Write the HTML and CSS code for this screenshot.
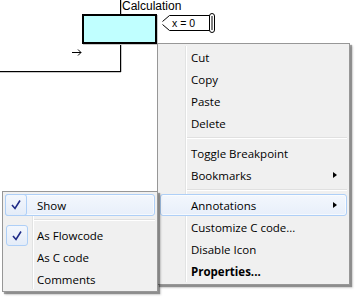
FILE: index.html
```html
<!DOCTYPE html>
<html>
<head>
<meta charset="utf-8">
<link rel="stylesheet" href="styles.css">
</head>
<body>
<div class="canvas">
  <div class="wire wire-v-top"></div>
  <div class="wire wire-v-bottom"></div>
  <div class="wire wire-h"></div>
  <div class="calc-box"></div>
  <div class="calc-label">Calculation</div>
  <svg class="tag" width="60" height="22" viewBox="0 0 60 22">
    <path d="M3.5 8.5 L10.5 2.5 L51.5 2.5 L51.5 17.5 L10.5 17.5 L3.5 11.5" fill="#fff" stroke="#000" stroke-width="1"/>
    <rect x="50.5" y="0.5" width="5" height="19" rx="2.5" fill="#fff" stroke="#000"/>
    <line x1="53" y1="3" x2="53" y2="17" stroke="#000" stroke-width="1"/>
    <text x="13" y="14" class="tag-text">x = 0</text>
  </svg>
  <svg class="arrow" width="12" height="8" viewBox="0 0 12 8">
    <path d="M0 4.5 H9 M6 1.5 L9 4.5 L6 7.5" fill="none" stroke="#000" stroke-width="1"/>
  </svg>

  <div class="menu main-menu">
    <div class="gutter"></div>
    <div class="item">Cut</div>
    <div class="item">Copy</div>
    <div class="item">Paste</div>
    <div class="item">Delete</div>
    <div class="sep"></div>
    <div class="item">Toggle Breakpoint</div>
    <div class="item">Bookmarks<span class="sub-arrow"></span></div>
    <div class="sep"></div>
    <div class="item active">Annotations<span class="sub-arrow"></span></div>
    <div class="item">Customize C code...</div>
    <div class="item">Disable Icon</div>
    <div class="item bold">Properties...</div>
  </div>

  <div class="menu sub-menu">
    <div class="gutter"></div>
    <div class="item active"><span class="check"><svg width="12" height="12" viewBox="0 0 12 12"><path d="M2 6 L5 9.5 L10 1.5" fill="none" stroke="#1e2a86" stroke-width="1.6"/></svg></span>Show</div>
    <div class="sep"></div>
    <div class="item"><span class="check"><svg width="12" height="12" viewBox="0 0 12 12"><path d="M2 6 L5 9.5 L10 1.5" fill="none" stroke="#1e2a86" stroke-width="1.6"/></svg></span>As Flowcode</div>
    <div class="item">As C code</div>
    <div class="item">Comments</div>
  </div>
</div>
</body>
</html>
```

FILE: styles.css
```css
* { box-sizing: border-box; }
html, body {
  margin: 0;
  padding: 0;
  background: #fff;
}
.canvas {
  position: relative;
  width: 356px;
  height: 297px;
  overflow: hidden;
  background: #fff;
  font-family: "Liberation Sans", Arial, sans-serif;
}
.wire {
  position: absolute;
  background: #000;
}
.wire-v-top {
  left: 120px;
  top: 0;
  width: 1px;
  height: 14px;
  box-shadow: 1px 0 0 #c8c8c8;
}
.wire-v-bottom {
  left: 120px;
  top: 44px;
  width: 1px;
  height: 28px;
  box-shadow: 1px 0 0 #c8c8c8;
}
.wire-h {
  left: 0;
  top: 71px;
  width: 121px;
  height: 1px;
  box-shadow: 0 1px 0 #c8c8c8;
}
.calc-box {
  position: absolute;
  left: 82px;
  top: 14px;
  width: 75px;
  height: 30px;
  border: 2px solid #000;
  background: #c0ffff;
  box-shadow: 1px 1px 0 #c8c8c8;
}
.calc-label {
  position: absolute;
  left: 122px;
  top: 0px;
  font-size: 12px;
  line-height: 13px;
  color: #000;
}
.tag {
  position: absolute;
  left: 159px;
  top: 13px;
}
.tag-text {
  font-family: "Liberation Sans", Arial, sans-serif;
  font-size: 10.5px;
  fill: #000;
}
.arrow {
  position: absolute;
  left: 72px;
  top: 48px;
}
.menu {
  position: absolute;
  background: #f0f0f0;
  border: 1px solid #979797;
  padding: 2px;
  box-shadow: 2px 2px 1px rgba(0,0,0,0.35), 3px 3px 2px rgba(0,0,0,0.15);
  font-family: "Open Sans", "Noto Sans", sans-serif;
  font-size: 11.5px;
  color: #000;
}
.main-menu {
  left: 157px;
  top: 43px;
  width: 193px;
  height: 242px;
}
.sub-menu {
  left: 2px;
  top: 191px;
  width: 156px;
  height: 101px;
}
.gutter {
  position: absolute;
  top: 2px;
  bottom: 2px;
  width: 1px;
  background: #e2e3e3;
  box-shadow: 1px 0 0 #fff;
}
.main-menu .gutter { left: 27px; }
.sub-menu .gutter { left: 29px; }
.item {
  position: relative;
  height: 22px;
  line-height: 21px;
  display: flex;
  align-items: center;
  border: 1px solid transparent;
  border-radius: 3px;
  white-space: nowrap;
}
.main-menu .item { padding-left: 30px; }
.sub-menu .item { padding-left: 31px; }
.item.active {
  border-color: #aecff7;
  background: linear-gradient(#f3f7fd, #e8effa);
  box-shadow: inset 0 0 0 1px rgba(255,255,255,0.6);
}
.item.bold { font-weight: bold; }
.sep {
  height: 8px;
  position: relative;
}
.sep::after {
  content: "";
  position: absolute;
  top: 3px;
  right: 0;
  height: 1px;
  background: #e0e0e0;
  box-shadow: 0 1px 0 #fff;
}
.main-menu .sep::after { left: 27px; }
.sub-menu .sep::after { left: 29px; }
.sub-arrow {
  position: absolute;
  right: 9px;
  top: 7px;
  width: 0;
  height: 0;
  border-top: 3.5px solid transparent;
  border-bottom: 3.5px solid transparent;
  border-left: 4px solid #000;
}
.check {
  position: absolute;
  left: 0;
  top: 0;
  width: 22px;
  height: 21px;
  border: 1px solid #aecff7;
  border-radius: 3px;
  background: linear-gradient(#f3f7fd, #e4ecf8);
  display: flex;
  align-items: center;
  justify-content: center;
}
.sub-menu .item.active .check { left: -1px; top: -1px; height: 22px; }
```
